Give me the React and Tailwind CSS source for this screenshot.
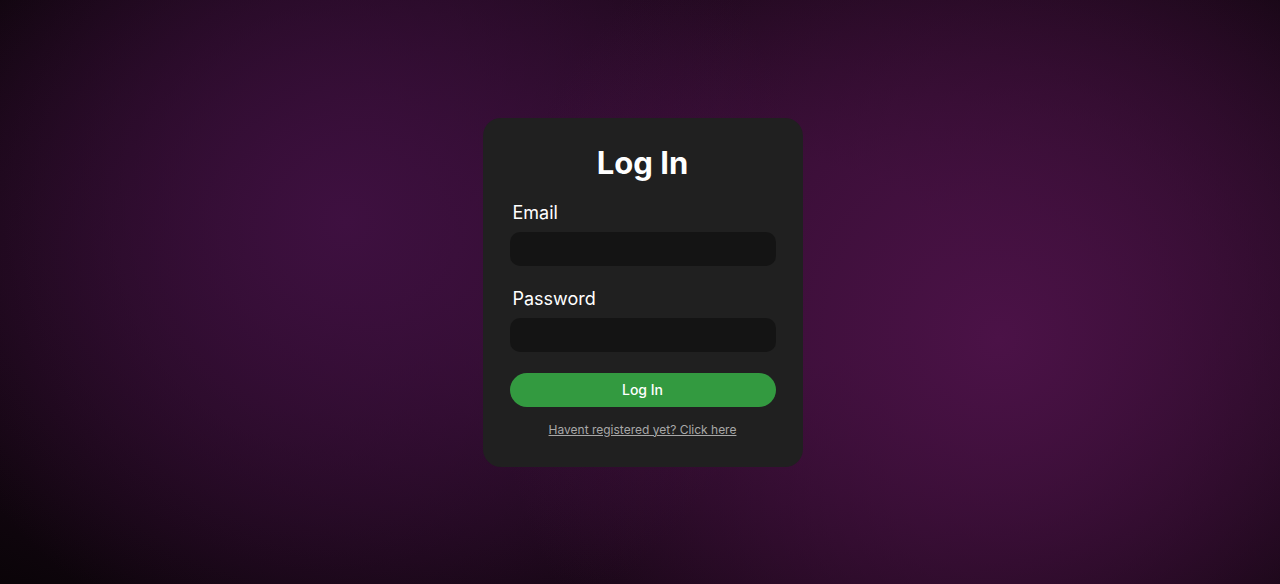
export default function App() {
  return (
    <div
      className="min-h-screen w-full flex items-center justify-center bg-[radial-gradient(circle_at_78%_58%,#4b1247_0%,rgba(75,18,71,0)_48%),radial-gradient(circle_at_27%_38%,#3e1040_0%,rgba(62,16,64,0)_45%),radial-gradient(ellipse_at_55%_45%,#2e0c2c_25%,#0a0408_100%)]"
      style={{ fontFamily: 'Inter, "Noto Sans", sans-serif' }}
    >
      <div className="w-[320px] ml-[5px] bg-[#202020] rounded-[18px] px-[27px] pt-[25px] pb-[27px] flex flex-col">
        <h1 className="text-white text-[31px] leading-[40px] font-bold text-center">Log In</h1>

        <label className="mt-[16px] pl-[3px] text-white text-[18px] leading-[27px]">Email</label>
        <input
          type="email"
          className="mt-[6px] h-[34px] w-full rounded-[10px] bg-[#141414] outline-none px-3 text-white text-sm"
        />

        <label className="mt-[19px] pl-[3px] text-white text-[18px] leading-[27px]">Password</label>
        <input
          type="password"
          className="mt-[6px] h-[34px] w-full rounded-[10px] bg-[#141414] outline-none px-3 text-white text-sm"
        />

        <button className="mt-[21px] h-[34px] w-full rounded-full bg-[#339a40] text-white text-[14px] font-medium">
          Log In
        </button>

        <a href="#" className="mt-[13px] text-center text-[12px] leading-[20px] text-[#a8a8a8] underline">
          Havent registered yet? Click here
        </a>
      </div>
    </div>
  );
}
